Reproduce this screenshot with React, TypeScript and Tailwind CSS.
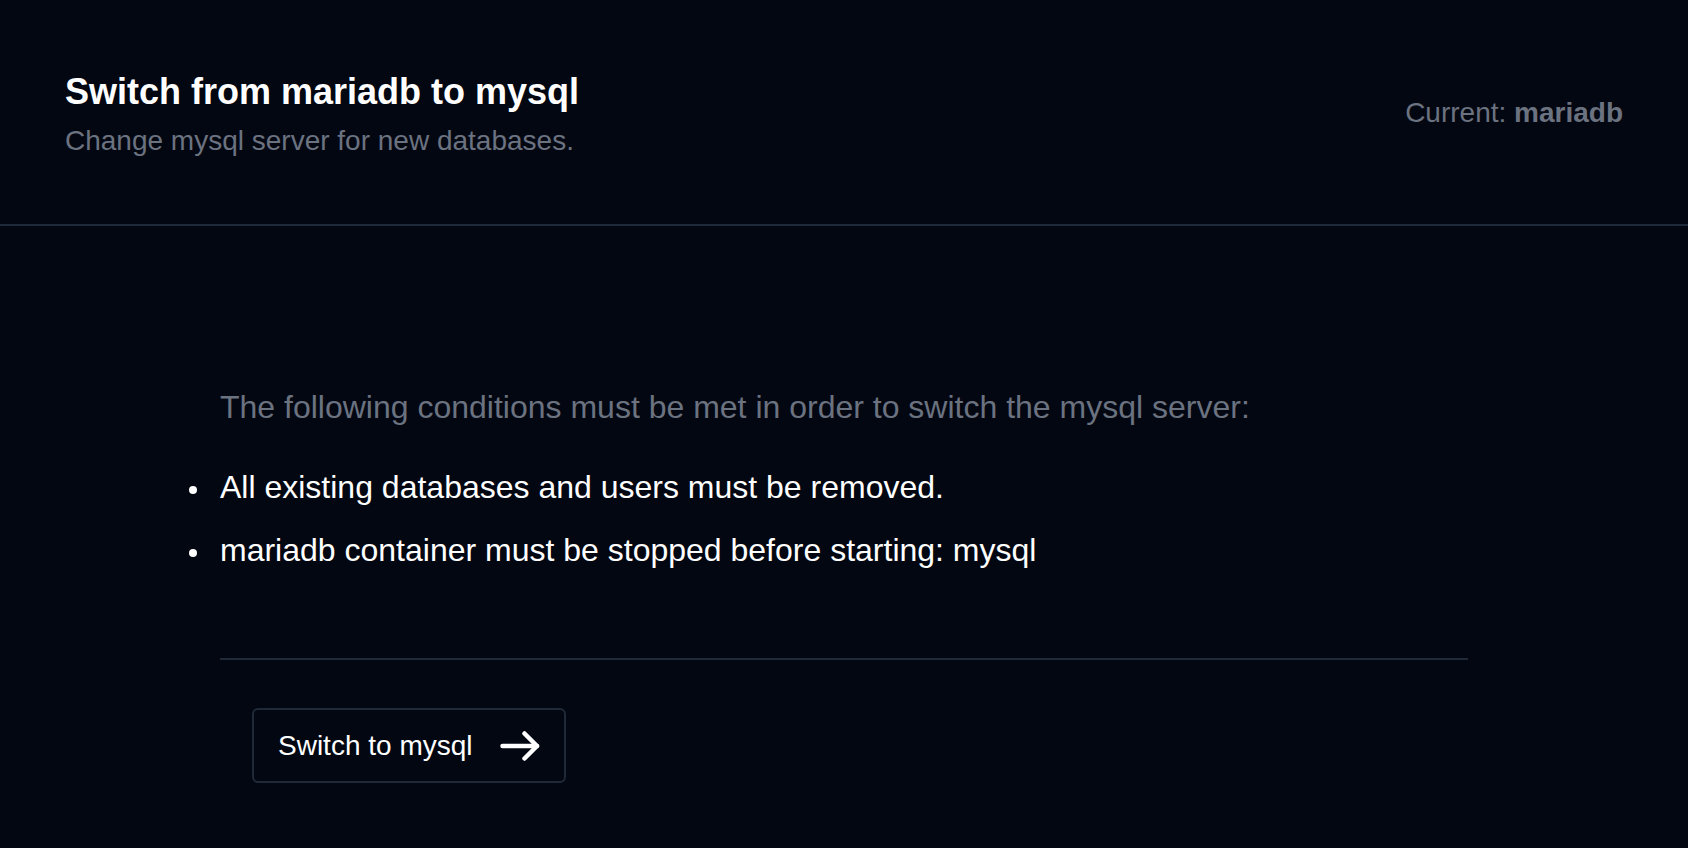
import React from "react";

const conditions = [
  "All existing databases and users must be removed.",
  "mariadb container must be stopped before starting: mysql",
];

const ArrowRight: React.FC = () => (
  <svg width="40" height="30" viewBox="0 0 40 30" fill="none" stroke="currentColor" strokeWidth="4.5" strokeLinecap="round" strokeLinejoin="round">
    <path d="M2.5 15H37" />
    <path d="M24.5 2.5L37 15L24.5 27.5" />
  </svg>
);

const App: React.FC = () => {
  return (
    <div className="min-h-screen bg-[#030712] font-['Liberation_Sans',Arial,sans-serif]">
      {/* header */}
      <div className="flex justify-between items-start px-[65px] pt-[72px] pb-[65px] border-b-2 border-[#1f2937]">
        <div>
          <h1 className="text-[36px] leading-[40px] font-bold text-white">Switch from mariadb to mysql</h1>
          <p className="mt-[11px] text-[28px] leading-[36px] text-[#6b7280]">Change mysql server for new databases.</p>
        </div>
        <div className="mt-[23px] text-[28px] leading-[36px] text-[#6b7280]">
          Current: <span className="font-bold">mariadb</span>
        </div>
      </div>

      {/* body */}
      <div className="mx-[220px] pt-[161px]">
        <p className="text-[32px] leading-[40px] text-[#6b7280]">
          The following conditions must be met in order to switch the mysql server:
        </p>
        <ul className="mt-[40px] flex flex-col gap-[23px]">
          {conditions.map((c) => (
            <li key={c} className="flex items-start -ml-[31px] gap-[23px] text-[32px] leading-[40px] text-white">
              <span className="mt-[19px] w-[8px] h-[8px] rounded-full bg-white shrink-0" />
              <span>{c}</span>
            </li>
          ))}
        </ul>
        <div className="mt-[88px] h-[2px] bg-[#1f2937]" />
        <div className="pt-[48px] pl-[32px] pb-[65px]">
          <button className="flex items-center gap-[27px] h-[75px] pl-[24px] pr-[24px] border-2 border-[#1f2937] rounded-md text-white text-[28px] leading-[36px]">
            <span>Switch to mysql</span>
            <ArrowRight />
          </button>
        </div>
      </div>
    </div>
  );
};

export default App;
